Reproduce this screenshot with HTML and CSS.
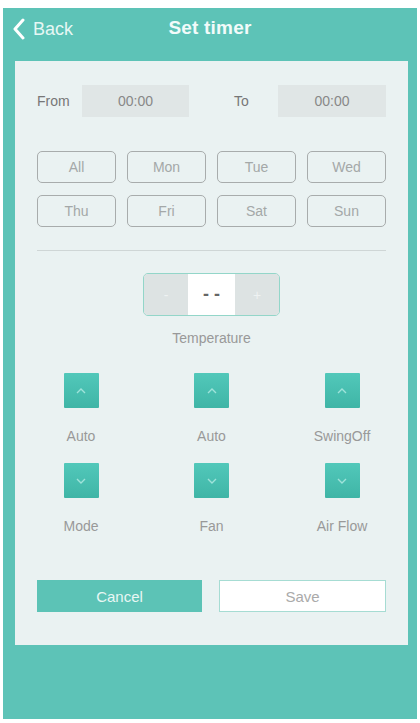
FILE: index.html
```html
<!DOCTYPE html>
<html>
<head>
<meta charset="utf-8">
<link rel="stylesheet" href="styles.css">
</head>
<body>
<div class="screen">
  <div class="app">
    <header class="topbar">
      <div class="back">
        <svg class="back-icon" width="14" height="22" viewBox="0 0 14 22"><path d="M11 2 L3 11 L11 20" fill="none" stroke="#fff" stroke-width="3" stroke-linecap="round" stroke-linejoin="round"/></svg>
        <span>Back</span>
      </div>
      <div class="title">Set timer</div>
    </header>
    <main class="panel">
      <div class="time-row">
        <span class="lbl from-lbl">From</span>
        <span class="time-box">00:00</span>
        <span class="lbl to-lbl">To</span>
        <span class="time-box box2">00:00</span>
      </div>
      <div class="days">
        <div class="day">All</div>
        <div class="day">Mon</div>
        <div class="day">Tue</div>
        <div class="day">Wed</div>
        <div class="day">Thu</div>
        <div class="day">Fri</div>
        <div class="day">Sat</div>
        <div class="day">Sun</div>
      </div>
      <div class="divider"></div>
      <div class="temp">
        <div class="stepper">
          <span class="step">-</span>
          <span class="value">- -</span>
          <span class="step">+</span>
        </div>
        <div class="temp-lbl">Temperature</div>
      </div>
      <div class="controls">
        <div class="ctrl">
          <div class="sq"><svg width="12" height="8" viewBox="0 0 12 8"><path d="M2 6 L6 2 L10 6" fill="none" stroke="#9fe3da" stroke-width="1.4"/></svg></div>
          <div class="clbl">Auto</div>
          <div class="sq"><svg width="12" height="8" viewBox="0 0 12 8"><path d="M2 2 L6 6 L10 2" fill="none" stroke="#9fe3da" stroke-width="1.4"/></svg></div>
          <div class="clbl">Mode</div>
        </div>
        <div class="ctrl">
          <div class="sq"><svg width="12" height="8" viewBox="0 0 12 8"><path d="M2 6 L6 2 L10 6" fill="none" stroke="#9fe3da" stroke-width="1.4"/></svg></div>
          <div class="clbl">Auto</div>
          <div class="sq"><svg width="12" height="8" viewBox="0 0 12 8"><path d="M2 2 L6 6 L10 2" fill="none" stroke="#9fe3da" stroke-width="1.4"/></svg></div>
          <div class="clbl">Fan</div>
        </div>
        <div class="ctrl">
          <div class="sq"><svg width="12" height="8" viewBox="0 0 12 8"><path d="M2 6 L6 2 L10 6" fill="none" stroke="#9fe3da" stroke-width="1.4"/></svg></div>
          <div class="clbl">SwingOff</div>
          <div class="sq"><svg width="12" height="8" viewBox="0 0 12 8"><path d="M2 2 L6 6 L10 2" fill="none" stroke="#9fe3da" stroke-width="1.4"/></svg></div>
          <div class="clbl">Air Flow</div>
        </div>
      </div>
      <div class="actions">
        <div class="btn cancel">Cancel</div>
        <div class="btn save">Save</div>
      </div>
    </main>
  </div>
</div>
</body>
</html>
```
FILE: styles.css
```css
* { box-sizing: border-box; }
html, body { margin: 0; padding: 0; background: #fff; }
body { font-family: "Liberation Sans", Arial, sans-serif; }
.screen { width: 420px; height: 723px; padding: 8px 3px 4px 3px; }
.app { background: #5dc3b7; height: 711px; display: flex; flex-direction: column; }
.topbar { height: 53px; position: relative; display: flex; align-items: center; justify-content: center; padding-bottom: 13px; }
.back { position: absolute; left: 9px; top: 10px; display: flex; align-items: center; gap: 7px; color: #e6f7f4; font-size: 18px; }
.back-icon { display: block; }
.title { color: #f2fbfa; font-size: 19px; font-weight: bold; letter-spacing: 0.2px; }
.panel { background: #eaf2f2; margin: 0 9px 0 12px; height: 584px; padding: 24px 22px 0 22px; }
.time-row { display: flex; align-items: center; height: 32px; }
.lbl { color: #777; font-size: 14px; }
.from-lbl { width: 45px; }
.time-box { width: 107px; height: 32px; background: #e0e6e6; color: #888; font-size: 14px; display: flex; align-items: center; justify-content: center; }
.to-lbl { width: 89px; padding-left: 45px; }
.box2 { width: 108px; }
.days { margin-top: 34px; display: grid; grid-template-columns: repeat(4, 1fr); column-gap: 11px; row-gap: 12px; }
.day { height: 32px; border: 1.5px solid #a8acac; border-radius: 5px; color: #a4a8a8; font-size: 14px; display: flex; align-items: center; justify-content: center; }
.divider { margin-top: 23px; height: 1px; background: #cfd6d6; }
.temp { margin-top: 22px; display: flex; flex-direction: column; align-items: center; }
.stepper { width: 137px; height: 43px; border: 1.5px solid #93d6c9; border-radius: 5px; display: flex; overflow: hidden; }
.step { width: 44px; background: #dde3e3; color: #eef2f2; font-size: 14px; display: flex; align-items: center; justify-content: center; }
.value { flex: 1; background: #fff; color: #666; font-size: 18px; font-weight: bold; display: flex; align-items: center; justify-content: center; }
.temp-lbl { margin-top: 14px; color: #999; font-size: 14px; }
.controls { margin-top: 27px; display: grid; grid-template-columns: repeat(3, 88px); justify-content: space-between; }
.ctrl { display: flex; flex-direction: column; align-items: center; }
.sq { width: 35px; height: 35px; background: linear-gradient(#52c8ba, #3fb5a6); display: flex; align-items: center; justify-content: center; border-radius: 1px; }
.clbl { height: 55px; padding-top: 20px; color: #999; font-size: 14px; line-height: 16px; }
.actions { margin-top: 27px; display: flex; gap: 17px; }
.btn { flex: 1; height: 32px; display: flex; align-items: center; justify-content: center; font-size: 15px; }
.cancel { background: #5cc3b6; color: #e8f7f4; }
.save { background: #fff; border: 1.5px solid #a6dcd3; color: #aaa; }
```
